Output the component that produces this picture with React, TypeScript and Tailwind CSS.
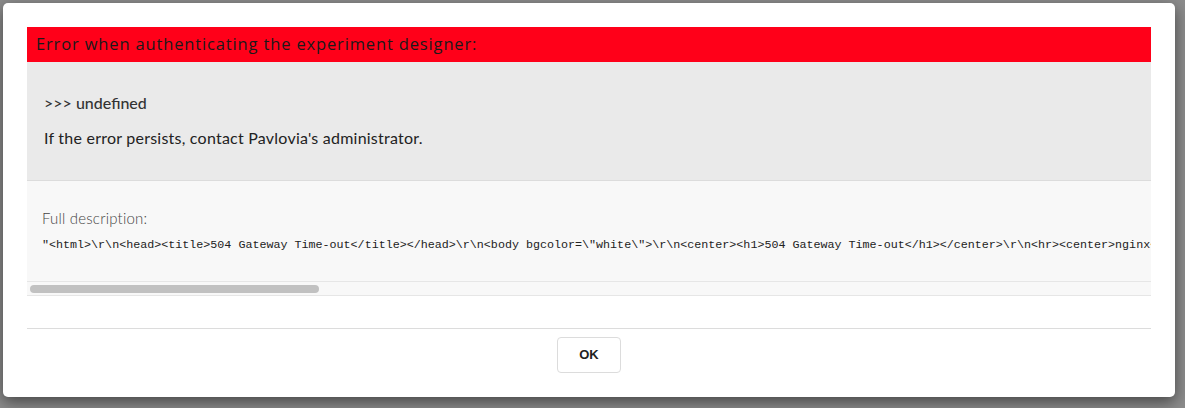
import React from "react";

const code =
  '"<html>\\r\\n<head><title>504 Gateway Time-out</title></head>\\r\\n<body bgcolor=\\"white\\">\\r\\n<center><h1>504 Gateway Time-out</h1></center>\\r\\n<hr><center>nginx</center>\\r\\n</body>\\r\\n</html>\\r\\n"';

export default function App() {
  return (
    <div className="w-[1185px] h-[408px] bg-[#8c8c8c] pl-[3px] pt-[3px] overflow-hidden" style={{ fontFamily: "Lato, 'Noto Sans', sans-serif" }}>
      <div className="w-[1172px] h-[394px] bg-white rounded-[5px] shadow-[0_5px_15px_rgba(0,0,0,0.5)] px-[24px] pt-[24px]">
        <div className="h-[35px] bg-[#ff0019] pl-[9px] flex items-center text-[16.5px] tracking-[0.85px] text-[#1a1a1a]" style={{ fontFamily: "'Open Sans', sans-serif" }}>
          Error when authenticating the experiment designer:
        </div>
        <div className="h-[118px] bg-[#eaeaea] px-[17px] pt-[29px]">
          <p className="text-[16px] leading-[24px] font-medium text-[#333]">&gt;&gt;&gt; undefined</p>
          <p className="mt-[11px] text-[16px] leading-[24px] tracking-[0.23px] text-[#222]">If the error persists, contact Pavlovia's administrator.</p>
        </div>
        <div className="bg-[#f8f8f8] border-t border-[#dcdcdc]">
          <div className="pl-[15px] pt-[27px] pb-[28px]">
            <p className="text-[15px] leading-[20px] font-light tracking-[0.2px] text-[#444]">Full description:</p>
            <pre className="mt-[9px] text-[11.7px] leading-[16px] text-[#222] whitespace-pre overflow-hidden" style={{ fontFamily: "'Liberation Mono', 'Courier New', monospace" }}>{code}</pre>
          </div>
          <div className="h-[15px] border-t border-b border-[#e6e6e6] pl-[3px] flex items-center">
            <div className="w-[289px] h-[8px] rounded-full bg-[#c1c1c1]" />
          </div>
        </div>
        <div className="mt-[32px] border-t border-[#dcdcdc] flex justify-center pt-[8px]">
          <button className="w-[64px] h-[36px] rounded-[4px] border border-[#dcdcdc] bg-white text-[13px] font-bold text-[#222]" style={{ fontFamily: "'Liberation Sans', Arial, sans-serif" }}>
            OK
          </button>
        </div>
      </div>
    </div>
  );
}
